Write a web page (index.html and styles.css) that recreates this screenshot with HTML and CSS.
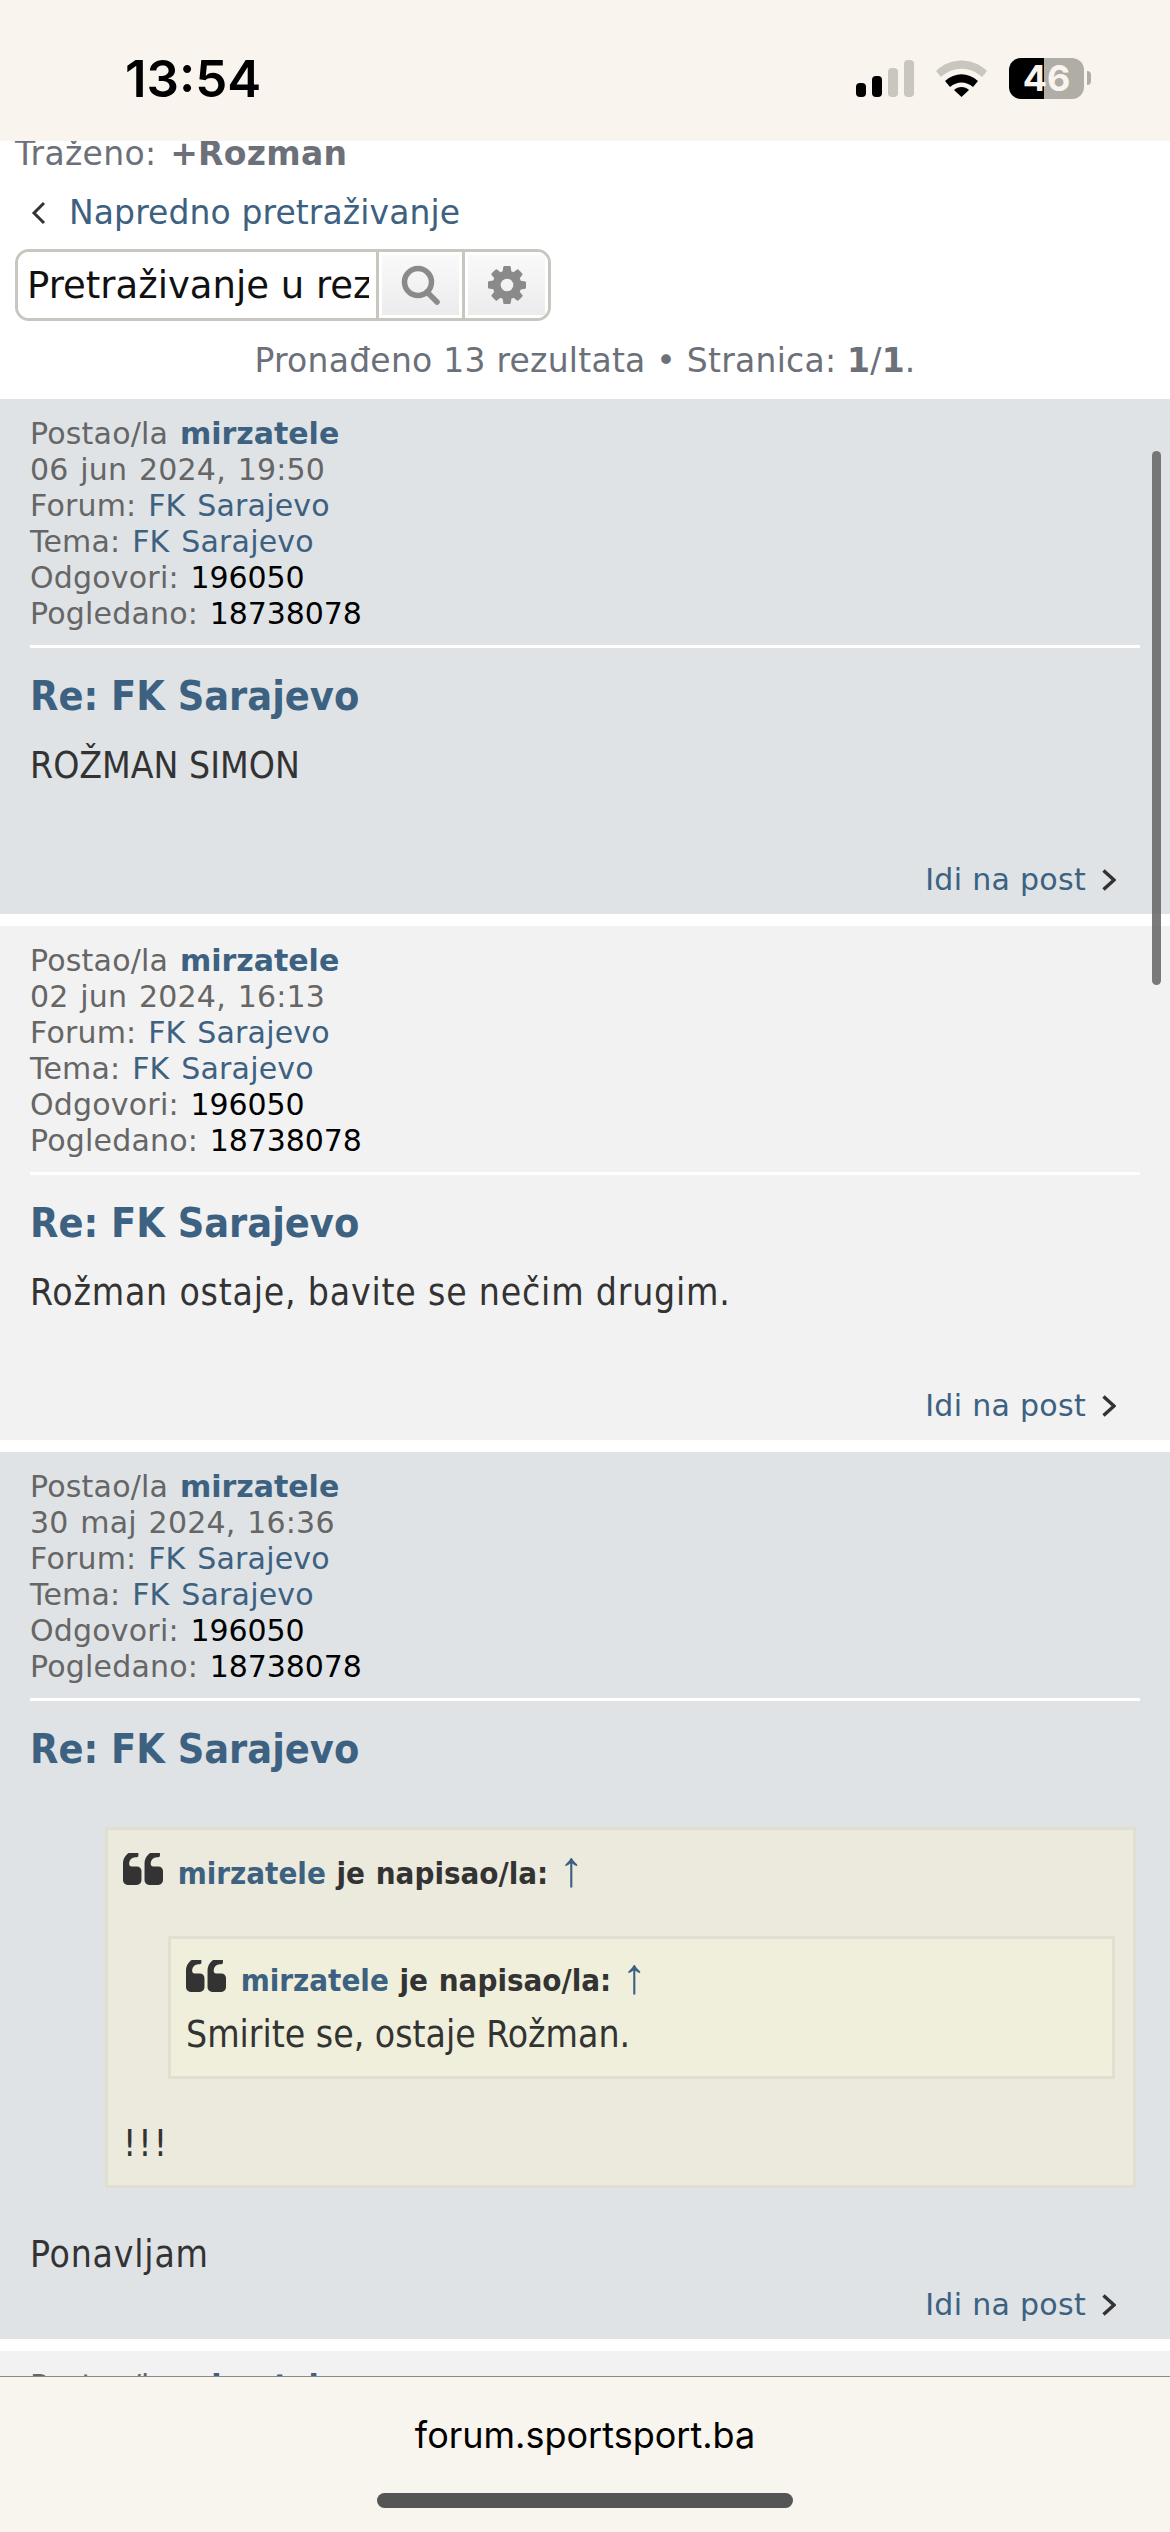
FILE: index.html
```html
<!DOCTYPE html>
<html lang="bs">
<head>
  <meta charset="UTF-8">
  <title>forum.sportsport.ba</title>
  <link rel="stylesheet" href="styles.css">
</head>
<body>
  <svg class="defs" width="0" height="0">
    <symbol id="quote-left" viewBox="0 256 1664 1280">
      <path d="M768 960v384q0 80-56 136t-136 56h-384q-80 0-136-56t-56-136v-704q0-104 40.500-198.500t109.500-163.500 163.500-109.500 198.500-40.500h64q26 0 45 19t19 45v128q0 26-19 45t-45 19h-64q-106 0-181 75t-75 181v32q0 40 28 68t68 28h224q80 0 136 56t56 136z"/>
      <path d="M1664 960v384q0 80-56 136t-136 56h-384q-80 0-136-56t-56-136v-704q0-104 40.500-198.500t109.500-163.500 163.500-109.500 198.500-40.500h64q26 0 45 19t19 45v128q0 26-19 45t-45 19h-64q-106 0-181 75t-75 181v32q0 40 28 68t68 28h224q80 0 136 56t56 136z"/>
    </symbol>
    <symbol id="chevron" viewBox="0 0 14 22">
      <path d="M1.500 1.500 L12 11 L1.500 20.500" fill="none" stroke="#333" stroke-width="3.500"/>
    </symbol>
  </svg>

  <header class="status">
    <span class="clock">13:54</span>
    <div class="status-icons">
      <svg class="signal" width="58" height="37" viewBox="0 0 58 37">
        <rect x="0" y="23" width="10" height="14" rx="4" fill="#000"/>
        <rect x="16" y="16" width="10" height="21" rx="4" fill="#000"/>
        <rect x="32" y="8" width="10" height="29" rx="4" fill="#c9c6bf"/>
        <rect x="48" y="0" width="10" height="37" rx="4" fill="#c9c6bf"/>
      </svg>
      <svg class="wifi" width="51" height="37" viewBox="0 0 51 37">
        <path d="M0 11 C14 -3 37 -3 51 11 L46 17 C34 6 17 6 5 17 Z" fill="#c9c6bf"/>
        <path d="M9 21 C19 12 32 12 42 21 L37 27 C30 21 21 21 14 27 Z" fill="#000"/>
        <path d="M18 30 C22 26 29 26 33 30 L25.500 37 Z" fill="#000"/>
      </svg>
      <div class="battery">
        <div class="battery-body"><span>46</span></div>
        <div class="battery-nub"></div>
      </div>
    </div>
  </header>

  <main class="page">
    <p class="searched">Traženo: <b>+Rozman</b></p>
    <p class="back">
      <svg class="back-icon" width="16" height="24" viewBox="0 0 16 24"><path d="M13 2 L3 12 L13 22" fill="none" stroke="#333" stroke-width="3"/></svg>
      <a href="#">Napredno pretraživanje</a>
    </p>

    <form class="search">
      <input type="text" value="" placeholder="Pretraživanje u rezultatima">
      <button type="button">
        <svg width="40" height="40" viewBox="0 0 40 40"><circle cx="17" cy="17" r="13.500" fill="none" stroke="#8a8a8a" stroke-width="5.500"/><path d="M26 27 L36 37" stroke="#8a8a8a" stroke-width="5.500" stroke-linecap="round"/></svg>
      </button>
      <button type="button">
        <svg width="38" height="38" viewBox="128 128 1536 1536"><path fill="#8a8a8a" d="M1152 896q0-106-75-181t-181-75-181 75-75 181 75 181 181 75 181-75 75-181zm512-109v222q0 12-8 23t-20 13l-185 28q-19 54-39 91 35 50 107 138 10 12 10 25t-9 23q-27 37-99 108t-94 71q-12 0-26-9l-138-108q-44 23-91 38-16 136-29 186-7 28-36 28h-222q-14 0-24.500-8.500t-11.500-21.500l-28-184q-49-16-90-37l-141 107q-10 9-25 9-14 0-25-11-126-114-165-168-7-10-7-23 0-12 8-23 15-21 51-66.500t54-70.500q-27-50-41-99l-183-27q-13-2-21-12.500t-8-23.500v-222q0-12 8-23t19-13l186-28q14-46 39-92-40-57-107-138-10-12-10-24 0-10 9-23 26-36 98.500-107.500t94.500-71.500q13 0 26 10l138 107q44-23 91-38 16-136 29-186 7-28 36-28h222q14 0 24.500 8.500t11.500 21.500l28 184q49 16 90 37l142-107q9-9 24-9 13 0 25 10 129 119 165 170 7 8 7 22 0 12-8 23-15 21-51 66.500t-54 70.500q26 50 41 98l183 28q13 2 21 12.500t8 23.500z"/></svg>
      </button>
    </form>

    <p class="results">Pronađeno 13 rezultata • Stranica: <b>1</b>/<b>1</b>.</p>

    <article class="post post-dark">
      <ul class="meta">
        <li>Postao/la <a class="author" href="#">mirzatele</a></li>
        <li>06 jun 2024, 19:50</li>
        <li>Forum: <a href="#">FK Sarajevo</a></li>
        <li>Tema: <a href="#">FK Sarajevo</a></li>
        <li>Odgovori: <span class="num">196050</span></li>
        <li>Pogledano: <span class="num">18738078</span></li>
      </ul>
      <h3 class="title"><a href="#">Re: FK Sarajevo</a></h3>
      <div class="content content-caps">ROŽMAN SIMON</div>
      <a class="goto" href="#">Idi na post <svg width="14" height="22"><use href="#chevron"/></svg></a>
    </article>

    <article class="post post-light">
      <ul class="meta">
        <li>Postao/la <a class="author" href="#">mirzatele</a></li>
        <li>02 jun 2024, 16:13</li>
        <li>Forum: <a href="#">FK Sarajevo</a></li>
        <li>Tema: <a href="#">FK Sarajevo</a></li>
        <li>Odgovori: <span class="num">196050</span></li>
        <li>Pogledano: <span class="num">18738078</span></li>
      </ul>
      <h3 class="title"><a href="#">Re: FK Sarajevo</a></h3>
      <div class="content">Rožman ostaje, bavite se nečim drugim.</div>
      <a class="goto" href="#">Idi na post <svg width="14" height="22"><use href="#chevron"/></svg></a>
    </article>

    <article class="post post-dark">
      <ul class="meta">
        <li>Postao/la <a class="author" href="#">mirzatele</a></li>
        <li>30 maj 2024, 16:36</li>
        <li>Forum: <a href="#">FK Sarajevo</a></li>
        <li>Tema: <a href="#">FK Sarajevo</a></li>
        <li>Odgovori: <span class="num">196050</span></li>
        <li>Pogledano: <span class="num">18738078</span></li>
      </ul>
      <h3 class="title"><a href="#">Re: FK Sarajevo</a></h3>
      <div class="content">
        <blockquote class="quote">
          <cite>
            <svg class="quote-icon" width="40" height="33"><use href="#quote-left"/></svg>
            <a href="#">mirzatele</a> je napisao/la: <a class="up" href="#">↑</a>
          </cite>
          <blockquote class="quote quote-inner">
            <cite>
              <svg class="quote-icon" width="40" height="33"><use href="#quote-left"/></svg>
              <a href="#">mirzatele</a> je napisao/la: <a class="up" href="#">↑</a>
            </cite>
            <p>Smirite se, ostaje Rožman.</p>
          </blockquote>
          <p class="after-quote">!!!</p>
        </blockquote>
        <p class="after-outer">Ponavljam</p>
      </div>
      <a class="goto" href="#">Idi na post <svg width="14" height="22"><use href="#chevron"/></svg></a>
    </article>

    <article class="post post-light">
      <ul class="meta">
        <li>Postao/la <a class="author" href="#">mirzatele</a></li>
      </ul>
    </article>
  </main>

  <div class="scrollbar"></div>

  <footer class="addressbar">
    <span class="url">forum.sportsport.ba</span>
    <div class="home-indicator"></div>
  </footer>
</body>
</html>
```

FILE: styles.css
```css
html, body {
  margin: 0;
  padding: 0;
}

body {
  position: relative;
  display: flex;
  flex-direction: column;
  width: 1170px;
  height: 2532px;
  overflow: hidden;
  background: #fff;
  font-family: "DejaVu Sans", sans-serif;
  font-size: 30px;
  letter-spacing: 0.3px;
  color: #333;
}

a {
  color: #3d6180;
  text-decoration: none;
}

.defs {
  position: absolute;
}

/* status bar */
.status {
  position: relative;
  z-index: 2;
  flex: none;
  display: flex;
  justify-content: space-between;
  align-items: center;
  height: 141px;
  padding: 15px 79px 0 125px;
  box-sizing: border-box;
  background: #f9f5ee;
  letter-spacing: 0;
}

.clock {
  font-family: Inter, sans-serif;
  font-size: 51px;
  font-weight: 600;
  color: #000;
}

.status-icons {
  display: flex;
  align-items: center;
  gap: 22px;
}

.signal, .wifi {
  display: block;
}

.battery {
  display: flex;
  align-items: center;
  gap: 3px;
}

.battery-body {
  display: flex;
  justify-content: center;
  align-items: center;
  width: 75px;
  height: 41px;
  border-radius: 12px;
  background: linear-gradient(to right, #000 47%, #b0ada7 47%);
}

.battery-body span {
  font-family: Inter, sans-serif;
  font-size: 36px;
  font-weight: 700;
  color: #f9f5ee;
}

.battery-nub {
  width: 4px;
  height: 14px;
  border-radius: 0 5px 5px 0;
  background: #b0ada7;
}

/* page */
.page {
  flex: 1;
  min-height: 0;
  overflow: hidden;
}

.searched {
  margin: -5px 0 0;
  padding-left: 15px;
  font-size: 33px;
  line-height: 36px;
  word-spacing: 3px;
  color: #6b7079;
}

.back {
  display: flex;
  align-items: center;
  gap: 22px;
  margin: 23px 0 0;
  padding-left: 31px;
  font-size: 33px;
  line-height: 36px;
  letter-spacing: 0.1px;
}

.back-icon {
  display: block;
}

.search {
  display: flex;
  width: 536px;
  height: 72px;
  margin: 18px 0 0 15px;
  border: 3px solid #c9c6c0;
  border-radius: 14px;
  box-sizing: border-box;
  overflow: hidden;
}

.search input {
  flex: 1;
  min-width: 0;
  padding: 0 7px 0 9px;
  border: 0;
  outline: 0;
  font-family: "DejaVu Sans", sans-serif;
  font-size: 37px;
  background: #fff;
}

.search input::placeholder {
  color: #111;
  opacity: 1;
}

.search button {
  flex: none;
  display: flex;
  justify-content: center;
  align-items: center;
  width: 86px;
  padding: 0;
  border: 0;
  border-left: 3px solid #c9c6c0;
  background: linear-gradient(to bottom, #fafafa, #ebebeb);
  box-shadow: inset 0 0 0 3px #fff;
}

.results {
  margin: 22px 0 20px;
  font-size: 33px;
  line-height: 36px;
  letter-spacing: 0.25px;
  text-align: center;
  color: #6b7079;
}

/* posts */
.post {
  margin-bottom: 12px;
  padding: 17px 30px 16px;
}

.post-dark {
  background: #dfe3e6;
}

.post-light {
  background: #f2f2f2;
}

.meta {
  margin: 0;
  padding: 0 0 13px;
  list-style: none;
  border-bottom: 3px solid #fff;
  line-height: 36px;
  letter-spacing: 0.2px;
  word-spacing: 2px;
  color: #666;
}

.author {
  font-weight: bold;
  letter-spacing: 0;
}

.num {
  color: #000;
  letter-spacing: -0.1px;
}

.title {
  margin: 23px 0 0;
  font-family: "DejaVu Sans Condensed", "DejaVu Sans", sans-serif;
  font-stretch: condensed;
  font-size: 41px;
  font-weight: 700;
  line-height: 50px;
  letter-spacing: 0;
}

.content {
  min-height: 113.5px;
  margin: 20px 0 7px;
  font-family: "DejaVu Sans Condensed", "DejaVu Sans", sans-serif;
  font-stretch: condensed;
  font-size: 37px;
  line-height: 50px;
  letter-spacing: 0.8px;
}

.content-caps {
  letter-spacing: 0;
}

.content p {
  margin: 0;
}

.goto {
  display: flex;
  justify-content: flex-end;
  align-items: center;
  gap: 16px;
  padding-right: 24px;
  line-height: 36px;
}

/* quotes */
.quote {
  margin: 53px 4px 0 75px;
  padding: 23px 18px 21px 15px;
  border: 3px solid #dfe0d2;
  background: #ebeadd;
  letter-spacing: 0;
}

.quote cite {
  display: block;
  font-style: normal;
  font-weight: 700;
  font-size: 31px;
  line-height: 40px;
  word-spacing: 1px;
}

.quote-icon {
  display: inline-block;
  vertical-align: -2px;
  margin-right: 4px;
  fill: #333;
}

.quote p {
  line-height: 40px;
}

.quote .up {
  font-family: "Liberation Sans", sans-serif;
  font-size: 50px;
  font-weight: 400;
  line-height: 30px;
  vertical-align: -2px;
}

.quote-inner {
  margin: 43px 0 0 45px;
  padding: 21px 15px 21px 15px;
  background: #efefdb;
}

.content .quote-inner p {
  margin-top: 15px;
}

.content .after-quote {
  margin-top: 45px;
  letter-spacing: 2px;
}

.content .after-outer {
  margin-top: 42px;
}

/* overlays */
.scrollbar {
  position: absolute;
  top: 451px;
  left: 1152px;
  width: 9px;
  height: 534px;
  border-radius: 5px;
  background: rgba(90, 90, 90, 0.8);
}

/* address bar */
.addressbar {
  position: relative;
  z-index: 2;
  flex: none;
  display: flex;
  flex-direction: column;
  align-items: center;
  height: 156px;
  border-top: 1px solid #8a8a8a;
  box-sizing: border-box;
  background: #f8f4ee;
  letter-spacing: 0;
}

.url {
  margin-top: 38px;
  font-family: Inter, sans-serif;
  font-size: 36px;
  line-height: 40px;
  color: #000;
}

.home-indicator {
  width: 416px;
  height: 15px;
  margin-top: 38px;
  border-radius: 8px;
  background: #555;
}
```
